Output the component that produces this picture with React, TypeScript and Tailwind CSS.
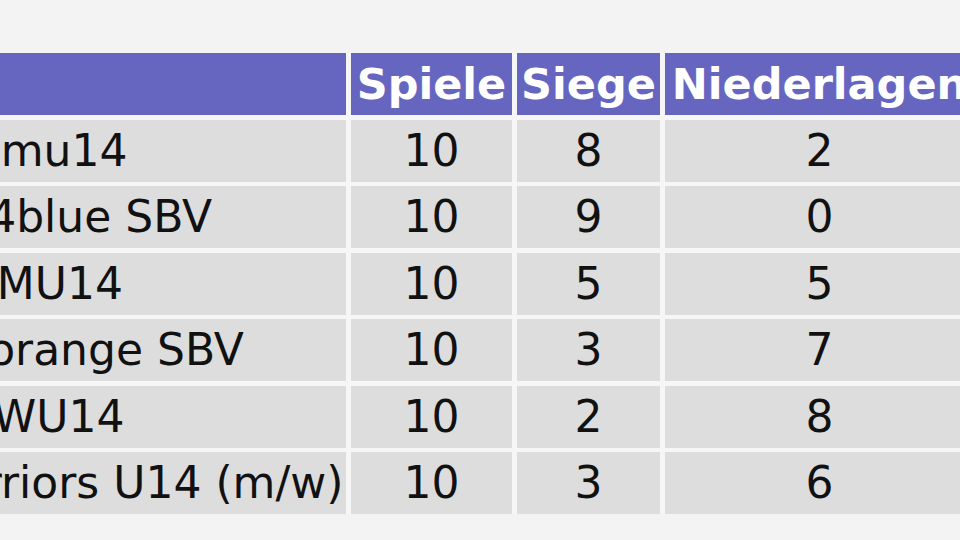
import React from 'react';

interface TeamRow {
  team: string;
  games: number;
  wins: number;
  losses: number;
  shift?: string;
}

// the team column starts off-screen, only the tail of each name is visible
const rows: TeamRow[] = [
  { team: 'SC mu14', games: 10, wins: 8, losses: 2 },
  { team: 'U14blue SBV', games: 10, wins: 9, losses: 0 },
  { team: 'ST MU14', games: 10, wins: 5, losses: 5 },
  { team: 'BCorange SBV', games: 10, wins: 3, losses: 7 },
  { team: 'GCWU14', games: 10, wins: 2, losses: 8 },
  { team: 'Warriors U14 (m/w)', games: 10, wins: 3, losses: 6, shift: 'ml-[-12px]' },
];

const headCell = 'h-[62px] bg-[#6666c1] text-white font-bold text-[43px] flex items-center justify-center whitespace-nowrap';
const bodyCell = 'h-[62px] bg-[#dddddd] text-[#111111] text-[44px] flex items-center justify-center whitespace-nowrap';

export default function App() {
  return (
    <div
      className="w-[960px] h-[540px] overflow-hidden bg-[#f3f3f3] pt-[53px]"
      style={{ fontFamily: '"DejaVu Sans", Verdana, sans-serif' }}
    >
      <div className="grid w-max ml-[-80px] grid-cols-[426px_161px_143px_309px] gap-x-[5px] gap-y-[4.5px] bg-[#f6f6f6]">
        <div className={headCell}></div>
        <div className={headCell}>Spiele</div>
        <div className={headCell}>Siege</div>
        <div className={headCell}>Niederlagen</div>

        {rows.map((row) => (
          <React.Fragment key={row.team}>
            <div className={`${bodyCell} !justify-start pl-[8px]`}>
              <span className={row.shift}>{row.team}</span>
            </div>
            <div className={bodyCell}>{row.games}</div>
            <div className={bodyCell}>{row.wins}</div>
            <div className={bodyCell}>{row.losses}</div>
          </React.Fragment>
        ))}
      </div>
    </div>
  );
}
